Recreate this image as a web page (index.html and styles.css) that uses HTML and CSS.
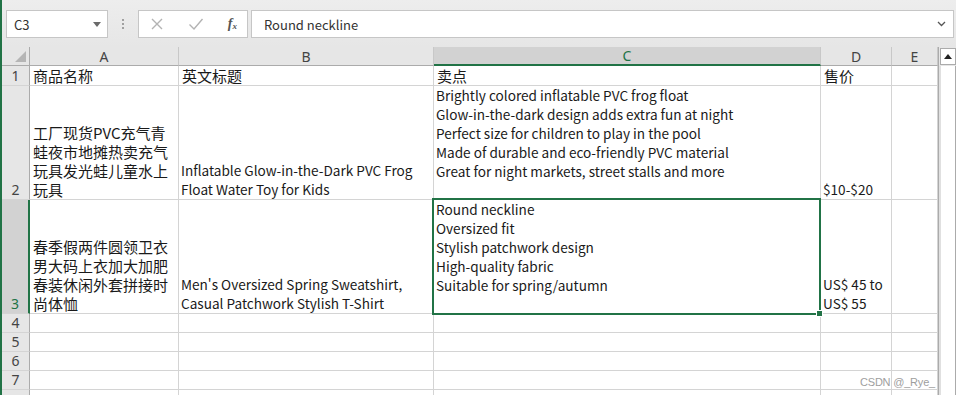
FILE: index.html
```html
<!DOCTYPE html>
<html lang="zh-CN">
<head>
    <meta charset="UTF-8">
    <title>Sheet1 - Excel</title>
    <link rel="stylesheet" href="styles.css">
</head>
<body>
<div class="app">

    <!-- Name box + formula bar -->
    <div class="toolbar">
        <div class="name-box">
            <span>C3</span>
            <svg class="caret" width="8" height="5" viewBox="0 0 8 5"><path d="M0 0h8L4 5z" fill="#6a6a6a"/></svg>
        </div>
        <div class="grip"><i></i><i></i><i></i></div>
        <div class="fn-box">
            <svg width="14" height="14" viewBox="0 0 14 14"><path d="M2 2l10 10M12 2L2 12" stroke="#b3b3b3" stroke-width="1.4" fill="none"/></svg>
            <svg width="16" height="14" viewBox="0 0 16 14"><path d="M1.5 7.5l4.5 4.5L14.5 2" stroke="#b3b3b3" stroke-width="1.4" fill="none"/></svg>
            <span class="fx">f<sub>x</sub></span>
        </div>
        <div class="formula">
            <span>Round neckline</span>
            <svg width="9" height="6" viewBox="0 0 9 6"><path d="M1 1l3.5 3.5L8 1" stroke="#555" stroke-width="1.3" fill="none"/></svg>
        </div>
    </div>

    <!-- Worksheet grid -->
    <div class="sheet">
        <div class="hd corner"></div>
        <div class="hd col">A</div>
        <div class="hd col">B</div>
        <div class="hd col sel">C</div>
        <div class="hd col">D</div>
        <div class="hd col">E</div>
        <div class="scroll-top"><svg width="8" height="5" viewBox="0 0 8 5"><path d="M0 5h8L4 0z" fill="#222"/></svg></div>

        <div class="hd row">1</div>
        <div class="cell zh">商品名称</div>
        <div class="cell zh">英文标题</div>
        <div class="cell zh">卖点</div>
        <div class="cell zh">售价</div>
        <div class="cell"></div>
        <div class="scroll-track"></div>

        <div class="hd row">2</div>
        <div class="cell zh">工厂现货PVC充气青蛙夜市地摊热卖充气玩具发光蛙儿童水上玩具</div>
        <div class="cell">Inflatable Glow-in-the-Dark PVC Frog Float Water Toy for Kids</div>
        <div class="cell top">Brightly colored inflatable PVC frog float<br>Glow-in-the-dark design adds extra fun at night<br>Perfect size for children to play in the pool<br>Made of durable and eco-friendly PVC material<br>Great for night markets, street stalls and more</div>
        <div class="cell">$10-$20</div>
        <div class="cell"></div>

        <div class="hd row sel">3</div>
        <div class="cell zh">春季假两件圆领卫衣男大码上衣加大加肥春装休闲外套拼接时尚体恤</div>
        <div class="cell">Men's Oversized Spring Sweatshirt, Casual Patchwork Stylish T-Shirt</div>
        <div class="cell top active">Round neckline<br>Oversized fit<br>Stylish patchwork design<br>High-quality fabric<br>Suitable for spring/autumn</div>
        <div class="cell">US$ 45 to US$ 55</div>
        <div class="cell"></div>

        <div class="hd row">4</div><div class="cell"></div><div class="cell"></div><div class="cell"></div><div class="cell"></div><div class="cell"></div>
        <div class="hd row">5</div><div class="cell"></div><div class="cell"></div><div class="cell"></div><div class="cell"></div><div class="cell"></div>
        <div class="hd row">6</div><div class="cell"></div><div class="cell"></div><div class="cell"></div><div class="cell"></div><div class="cell"></div>
        <div class="hd row">7</div><div class="cell"></div><div class="cell"></div><div class="cell"></div><div class="cell"></div><div class="cell"></div>
        <div class="hd row"></div><div class="cell"></div><div class="cell"></div><div class="cell"></div><div class="cell"></div><div class="cell"></div>
    </div>

    <div class="watermark">CSDN @_Rye_</div>
</div>
</body>
</html>
```

FILE: styles.css
```css
/* Global */
body {
    margin: 0;
    background: #ffffff;
    font-family: "Noto Sans CJK SC", "Noto Sans", sans-serif;
    color: #1a1a1a;
}

.app {
    position: relative;
    width: 954px;
    height: 395px;
    overflow: hidden;
    border-left: 2px solid #217346;
}

/* Formula bar */
.toolbar {
    height: 47px;
    box-sizing: border-box;
    background: linear-gradient(#ededed, #e6e6e6);
    display: flex;
    align-items: flex-start;
    padding: 10px 0 0 4px;
}

.name-box,
.fn-box,
.formula {
    height: 28px;
    box-sizing: border-box;
    background: #ffffff;
    border: 1px solid #c6c6c6;
    display: flex;
    align-items: center;
    font-size: 13px;
    color: #333;
}

.name-box {
    width: 102px;
    padding: 0 6px 0 7px;
    justify-content: space-between;
}

.grip {
    width: 30px;
    height: 28px;
    display: flex;
    flex-direction: column;
    align-items: center;
    justify-content: center;
    gap: 2px;
}

.grip i {
    width: 2px;
    height: 2px;
    background: #a0a0a0;
}

.fn-box {
    width: 110px;
    padding: 0 10px 0 11px;
    justify-content: space-between;
}

.fx {
    font-family: "Liberation Serif", serif;
    font-style: italic;
    font-weight: bold;
    font-size: 14px;
    color: #555;
}

.fx sub {
    font-size: 9px;
    vertical-align: -1px;
}

.formula {
    width: 703px;
    margin-left: 3px;
    padding: 0 7px 0 12px;
    justify-content: space-between;
}

/* Sheet grid */
.sheet {
    display: grid;
    grid-template-columns: 28px 149px 255px 387px 71px 46px 18px;
    grid-template-rows: 19px 20px 114px 114px 19px 19px 19px 19px 19px;
    font-size: 13.6px;
    line-height: 19px;
}

.hd {
    background: #e6e6e6;
    color: #444;
    box-sizing: border-box;
    display: flex;
    align-items: center;
    justify-content: center;
    font-family: "Noto Sans", sans-serif;
    font-size: 14px;
}

.hd.col {
    border-right: 1px solid #c8c8c8;
    border-bottom: 1px solid #ababab;
}

.hd.row {
    border-right: 1px solid #ababab;
    border-bottom: 1px solid #d4d4d4;
    align-items: flex-end;
}

.hd.sel {
    background: #d2d2d2;
    color: #217346;
}

.hd.col.sel {
    border-bottom: 2px solid #217346;
}

.hd.row.sel {
    border-right: 2px solid #217346;
}

.corner {
    position: relative;
    border-right: 1px solid #ababab;
    border-bottom: 1px solid #ababab;
}

.corner::after {
    content: "";
    position: absolute;
    right: 3px;
    bottom: 3px;
    border-left: 11px solid transparent;
    border-bottom: 11px solid #b5b5b5;
}

.cell {
    box-sizing: border-box;
    border-right: 1px solid #d4d4d4;
    border-bottom: 1px solid #d4d4d4;
    padding: 0 2px 0 2px;
    display: flex;
    align-items: flex-end;
    overflow: hidden;
}

.cell.zh {
    font-size: 15px;
    padding-left: 3px;
}

.cell.top {
    align-items: flex-start;
}

.cell.active {
    position: relative;
    overflow: visible;
}

.cell.active::after {
    content: "";
    position: absolute;
    top: -2px;
    left: -2px;
    right: -1px;
    bottom: -2px;
    border: 2px solid #217346;
    pointer-events: none;
}

.cell.active::before {
    content: "";
    position: absolute;
    right: -3px;
    bottom: -4px;
    width: 5px;
    height: 5px;
    background: #217346;
    border: 1px solid #fff;
    z-index: 2;
}

/* Scrollbar */
.scroll-top {
    background: #e6e6e6;
    display: flex;
    align-items: center;
    justify-content: center;
    border-left: 1px solid #ababab;
    box-sizing: border-box;
}

.scroll-top svg {
    background: #fff;
    border: 1px solid #ababab;
    padding: 5px 3px;
}

.scroll-track {
    grid-row: 2 / span 8;
    grid-column: 7;
    background: #ffffff;
    border-left: 1px solid #ababab;
    border-right: 1px solid #ababab;
    box-shadow: inset 2px 0 0 #e0e0e0;
}

.watermark {
    position: absolute;
    right: 21px;
    bottom: 7px;
    font-family: "Liberation Sans", sans-serif;
    font-size: 11px;
    letter-spacing: -0.2px;
    color: #9e9e9e;
}
```
